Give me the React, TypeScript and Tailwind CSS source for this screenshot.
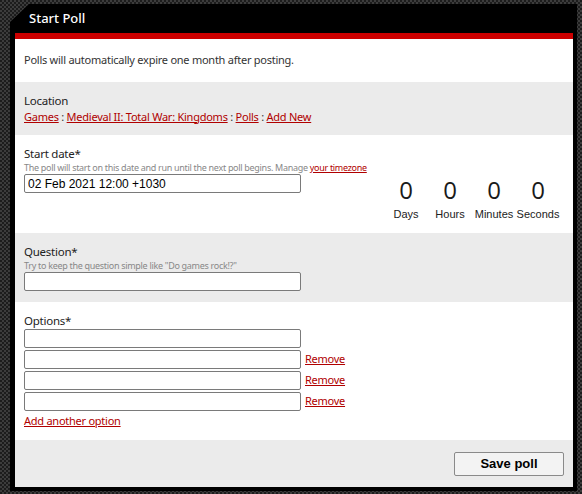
const FONT = "font-['Noto_Sans',sans-serif] tracking-[-0.25px]";
const LINK = 'text-[#b00000] underline decoration-[#b00000]';
const LABEL = 'text-[11.5px] leading-[16px] text-[#222]';
const HINT = 'whitespace-nowrap text-[9px] leading-[12px] tracking-[-0.3px] text-[#888]';

function TextInput({ value = '' }: { value?: string }) {
  return (
    <input
      type="text"
      defaultValue={value}
      className="h-[19px] w-[277px] rounded-[2px] border border-[#7a7a7a] bg-white px-[3px] font-['Liberation_Sans',sans-serif] text-[12px] tracking-normal text-black outline-none"
    />
  );
}

function Countdown() {
  const units = ['Days', 'Hours', 'Minutes', 'Seconds'];
  return (
    <div className="flex items-start pt-[30px]">
      {units.map((u) => (
        <div key={u} className="flex w-[44px] flex-col items-center">
          <span className="font-['Open_Sans',sans-serif] text-[24px] leading-[28px] tracking-normal text-[#1a1a1a]">0</span>
          <span className="mt-[2px] font-['Liberation_Sans',sans-serif] text-[11px] tracking-normal text-[#222]">{u}</span>
        </div>
      ))}
    </div>
  );
}

export default function App() {
  return (
    <div className="h-[494px] w-[582px] overflow-hidden pb-[3px] pl-[10px] pr-[5px] pt-[4px] [background-image:repeating-conic-gradient(#3c3c3c_0_25%,#1c1c1c_0_50%)] [background-size:4px_4px]">
      <div
        className={`flex h-full flex-col bg-black pb-[4px] pl-[5px] pr-[4px] ${FONT} text-[11px] text-[#333] [clip-path:polygon(19px_0,100%_0,100%_100%,0_100%,0_18px)]`}
      >
        <div className="flex h-[29px] items-center pl-[14px] text-[13px] font-medium tracking-normal text-white">
          Start Poll
        </div>
        <div className="h-[6px] bg-[#cc0000]" />
        <div className="flex flex-1 flex-col">
          <div className="flex h-[43px] items-center bg-white px-[9px]">
            Polls will automatically expire one month after posting.
          </div>

          <div className="flex h-[53px] flex-col justify-center bg-[#ebebeb] px-[9px]">
            <div className={LABEL}>Location</div>
            <div className="leading-[16px]">
              <a className={LINK}>Games</a> : <a className={LINK}>Medieval II: Total War: Kingdoms</a> :{' '}
              <a className={LINK}>Polls</a> : <a className={LINK}>Add New</a>
            </div>
          </div>

          <div className="flex h-[98px] bg-white px-[9px] pt-[11px]">
            <div className="flex flex-col">
              <div className={LABEL}>Start date*</div>
              <div className={HINT}>
                The poll will start on this date and run until the next poll begins. Manage{' '}
                <a className={LINK}>your timezone</a>
              </div>
              <TextInput value="02 Feb 2021 12:00 +1030" />
            </div>
            <div className="ml-auto pr-[4px]">
              <Countdown />
            </div>
          </div>

          <div className="flex h-[69px] flex-col bg-[#ebebeb] px-[9px] pt-[11px]">
            <div className={LABEL}>Question*</div>
            <div className={HINT}>Try to keep the question simple like "Do games rock!?"</div>
            <TextInput />
          </div>

          <div className="flex h-[138px] flex-col bg-white px-[9px] pt-[11px]">
            <div className={LABEL}>Options*</div>
            <div className="flex flex-col gap-[2px]">
              {[0, 1, 2, 3].map((i) => (
                <div key={i} className="flex items-center gap-[4px]">
                  <TextInput />
                  {i > 0 && <a className={LINK}>Remove</a>}
                </div>
              ))}
            </div>
            <a className={`${LINK} mt-[2px] self-start`}>Add another option</a>
          </div>

          <div className="flex flex-1 items-center justify-end bg-[#ebebeb] px-[9px]">
            <button
              type="button"
              className="h-[24px] w-[110px] rounded-[2px] border border-[#8a8a8a] bg-[#f3f3f3] font-['Liberation_Sans',sans-serif] text-[13px] font-bold tracking-normal text-black"
            >
              Save poll
            </button>
          </div>
        </div>
      </div>
    </div>
  );
}
